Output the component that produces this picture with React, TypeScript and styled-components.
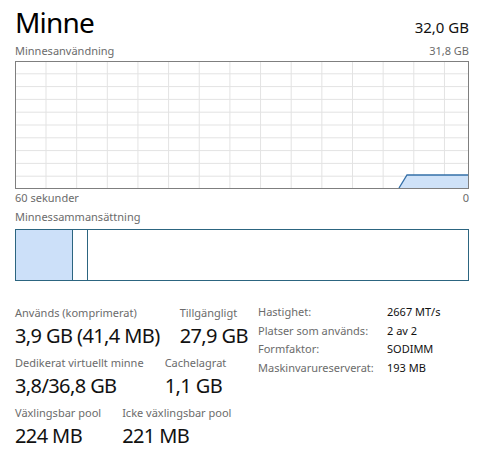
import React from 'react';
import styled, { createGlobalStyle } from 'styled-components';

const GlobalStyle = createGlobalStyle`
    html, body {
        margin: 0;
        padding: 0;
        background: #ffffff;
    }
    body {
        font-family: 'Noto Sans', 'Open Sans', sans-serif;
        color: #000000;
    }
`;

const GRAPH_W = 452;
const GRAPH_H = 126;
const COL_STEP = 30.65;
const ROW_STEP = 12.8;

const Page = styled.div`
    width: 454px;
    padding: 5px 11px 0 15px;
    display: flex;
    flex-direction: column;
`;

const Header = styled.div`
    display: flex;
    justify-content: space-between;
    align-items: baseline;
    height: 34px;
`;

const Title = styled.div`
    font-size: 28px;
    line-height: 34px;
    letter-spacing: -0.8px;
    color: #000;
`;

const Total = styled.div`
    font-size: 15px;
    line-height: 34px;
    color: #111;
`;

const Caption = styled.div<{ $mt?: number }>`
    display: flex;
    justify-content: space-between;
    font-size: 11px;
    line-height: 14px;
    color: #6b6b6b;
    margin-top: ${(p) => p.$mt ?? 0}px;
`;

const GraphBox = styled.div`
    margin-top: 3px;
    height: ${GRAPH_H}px;
    border: 1px solid #7f7f7f;
    svg {
        display: block;
    }
`;

const CompBar = styled.div`
    margin-top: 5px;
    height: 50px;
    border: 1px solid #2c6580;
    display: flex;
`;

const Segment = styled.div<{ $width?: number; $fill?: string }>`
    flex: ${(p) => (p.$width ? `0 0 ${p.$width}px` : '1 1 auto')};
    background: ${(p) => p.$fill ?? 'transparent'};
    border-right: ${(p) => (p.$width ? '1px solid #2c6580' : 'none')};
`;

const Stats = styled.div`
    margin-top: 25px;
    display: flex;
`;

const StatGrid = styled.div`
    width: 243px;
    display: flex;
    flex-direction: column;
    gap: 8px;
`;

const StatRow = styled.div<{ $gap: number }>`
    display: flex;
    gap: ${(p) => p.$gap}px;
`;

const Stat = styled.div`
    display: flex;
    flex-direction: column;
    gap: 4px;
`;

const StatLabel = styled.div`
    font-size: 11px;
    line-height: 14px;
    color: #6b6b6b;
    white-space: nowrap;
`;

const StatValue = styled.div`
    font-size: 20px;
    line-height: 24px;
    letter-spacing: -0.6px;
    color: #111;
    white-space: nowrap;
`;

const InfoTable = styled.div`
    margin-top: -3px;
    display: grid;
    grid-template-columns: 129px auto;
    grid-auto-rows: 18.6px;
    align-content: start;
    font-size: 11px;
    line-height: 18.6px;
`;

const InfoKey = styled.div`
    color: #6b6b6b;
    white-space: nowrap;
`;

const InfoVal = styled.div`
    color: #111;
    white-space: nowrap;
`;

function UsageGraph() {
    const cols = [];
    for (let x = 30; x < GRAPH_W; x += COL_STEP) cols.push(x);
    const rows = [];
    for (let k = 1; k < 10; k++) rows.push(ROW_STEP * k - 1);
    const top = 113;
    return (
        <svg width={GRAPH_W} height={GRAPH_H} viewBox={`0 0 ${GRAPH_W} ${GRAPH_H}`}>
            {cols.map((x) => (
                <line key={`c${x}`} x1={x} x2={x} y1={0} y2={GRAPH_H} stroke='#e3e3e3' strokeWidth={1} />
            ))}
            {rows.map((y) => (
                <line key={`r${y}`} x1={0} x2={GRAPH_W} y1={y} y2={y} stroke='#e3e3e3' strokeWidth={1} />
            ))}
            <polygon points={`383,${GRAPH_H} 391,${top} ${GRAPH_W},${top} ${GRAPH_W},${GRAPH_H}`} fill='#cfe2f8' />
            <polyline points={`383,${GRAPH_H} 391,${top} ${GRAPH_W},${top}`} fill='none' stroke='#3570a8' strokeWidth={1.3} />
        </svg>
    );
}

const stats = [
    {
        gap: 20,
        items: [
            { label: 'Används (komprimerat)', value: '3,9 GB (41,4 MB)' },
            { label: 'Tillgängligt', value: '27,9 GB' },
        ],
    },
    {
        gap: 21,
        items: [
            { label: 'Dedikerat virtuellt minne', value: '3,8/36,8 GB' },
            { label: 'Cachelagrat', value: '1,1 GB' },
        ],
    },
    {
        gap: 21,
        items: [
            { label: 'Växlingsbar pool', value: '224 MB' },
            { label: 'Icke växlingsbar pool', value: '221 MB' },
        ],
    },
];

const info = [
    ['Hastighet:', '2667 MT/s'],
    ['Platser som används:', '2 av 2'],
    ['Formfaktor:', 'SODIMM'],
    ['Maskinvarureserverat:', '193 MB'],
];

export default function App() {
    return (
        <>
            <GlobalStyle />
            <Page>
                <Header>
                    <Title>Minne</Title>
                    <Total>32,0 GB</Total>
                </Header>
                <Caption $mt={5}>
                    <span>Minnesanvändning</span>
                    <span>31,8 GB</span>
                </Caption>
                <GraphBox>
                    <UsageGraph />
                </GraphBox>
                <Caption $mt={2}>
                    <span>60 sekunder</span>
                    <span>0</span>
                </Caption>
                <Caption $mt={5}>
                    <span>Minnessammansättning</span>
                </Caption>
                <CompBar>
                    <Segment $width={56} $fill='#cce0f9' />
                    <Segment $width={14} />
                    <Segment />
                </CompBar>
                <Stats>
                    <StatGrid>
                        {stats.map((row, i) => (
                            <StatRow key={i} $gap={row.gap}>
                                {row.items.map((s) => (
                                    <Stat key={s.label}>
                                        <StatLabel>{s.label}</StatLabel>
                                        <StatValue>{s.value}</StatValue>
                                    </Stat>
                                ))}
                            </StatRow>
                        ))}
                    </StatGrid>
                    <InfoTable>
                        {info.map(([k, v]) => (
                            <React.Fragment key={k}>
                                <InfoKey>{k}</InfoKey>
                                <InfoVal>{v}</InfoVal>
                            </React.Fragment>
                        ))}
                    </InfoTable>
                </Stats>
            </Page>
        </>
    );
}
